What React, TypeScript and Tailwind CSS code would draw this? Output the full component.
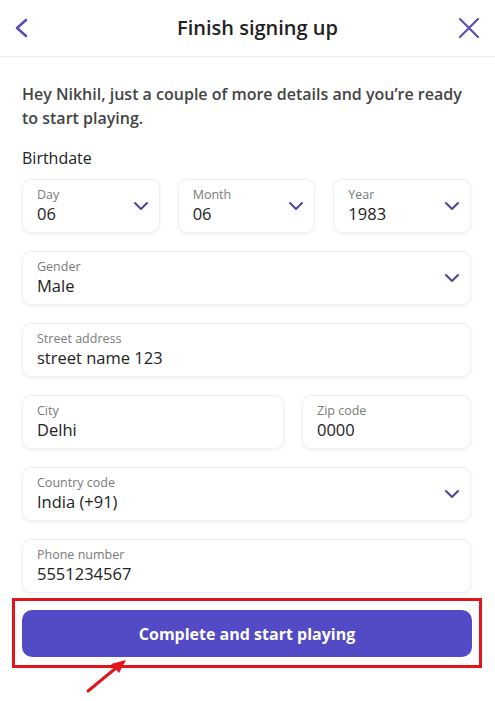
import { ChevronDown } from "lucide-react";

type FieldProps = {
  label: string;
  value: string;
  select?: boolean;
  className?: string;
};

function Field({ label, value, select, className = "" }: FieldProps) {
  return (
    <div
      className={`flex h-[54px] items-center rounded-[9px] border border-[#f0f0f2] bg-white pl-[14px] pr-[6px] shadow-[0_1px_4px_rgba(0,0,0,0.06)] ${className}`}
    >
      <div className="flex min-w-0 flex-1 flex-col">
        <span className="text-[12.5px] leading-[16px] text-[#7a7a7a]">{label}</span>
        <span className="text-[16.5px] leading-[22px] text-[#222]">{value}</span>
      </div>
      {select && <ChevronDown className="h-[24px] w-[24px] text-[#4e4799]" strokeWidth={2} />}
    </div>
  );
}

export default function App() {
  return (
    <div className="relative min-h-[701px] w-[495px] bg-white" style={{ fontFamily: '"Open Sans", sans-serif' }}>
      <header className="flex h-[57px] items-center border-b border-[#eeeeee] pl-[12px] pr-[12px] shadow-[0_1px_2px_rgba(0,0,0,0.03)]">
        <svg width="20" height="24" viewBox="0 0 20 24" className="text-[#5a4fb3]">
          <polyline points="14,4 5,12 14,20" fill="none" stroke="currentColor" strokeWidth="2.6" strokeLinecap="round" strokeLinejoin="round" />
        </svg>
        <h1 className="flex-1 pl-[28px] text-center text-[20px] font-semibold text-[#222]">Finish signing up</h1>
        <svg width="28" height="28" viewBox="0 0 28 28" className="text-[#5a4fb3]">
          <path d="M5 5 L23 23 M23 5 L5 23" fill="none" stroke="currentColor" strokeWidth="2.2" strokeLinecap="round" />
        </svg>
      </header>

      <main className="pl-[22px] pr-[24px]">
        <p className="mt-[25px] text-[16px] font-semibold leading-[24px] text-[#444]">
          Hey Nikhil, just a couple of more details and you’re ready to start playing.
        </p>
        <p className="mt-[16px] text-[16px] leading-[24px] text-[#222]">Birthdate</p>

        <div className="mt-[9px] grid grid-cols-3 gap-[18px]">
          <Field label="Day" value="06" select />
          <Field label="Month" value="06" select />
          <Field label="Year" value="1983" select />
        </div>

        <div className="mt-[18px] flex flex-col gap-[18px]">
          <Field label="Gender" value="Male" select />
          <Field label="Street address" value="street name 123" />
          <div className="flex gap-[18px]">
            <Field label="City" value="Delhi" className="w-[262px]" />
            <Field label="Zip code" value="0000" className="flex-1" />
          </div>
          <Field label="Country code" value="India (+91)" select />
          <Field label="Phone number" value="5551234567" />
        </div>

        <div className="-ml-[10px] -mr-[11px] mt-[5px] border-[3px] border-[#e3141c] px-[7px] pb-[8px] pt-[9px]">
          <button className="flex h-[47px] w-full items-center justify-center rounded-[10px] bg-[#534ac5] text-[16px] font-bold text-white">
            Complete and start playing
          </button>
        </div>
      </main>

      <svg className="absolute left-[84px] top-[656px]" width="48" height="40" viewBox="0 0 48 40">
        <line x1="4" y1="35" x2="32" y2="12" stroke="#e3141c" strokeWidth="3" strokeLinecap="round" />
        <polygon points="42,4 27,8 35,17" fill="#e3141c" />
      </svg>
    </div>
  );
}
